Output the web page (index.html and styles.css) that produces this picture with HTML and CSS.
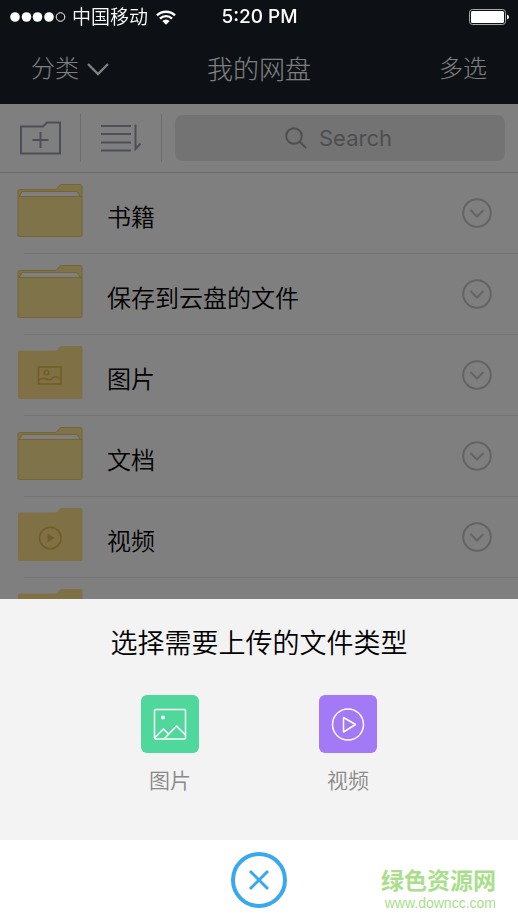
FILE: index.html
```html
<!DOCTYPE html>
<html lang="zh-CN">
<head>
<meta charset="utf-8">
<meta name="viewport" content="width=device-width, initial-scale=1">
<title>我的网盘</title>
<link rel="stylesheet" href="styles.css">
</head>
<body>
<svg class="defs" aria-hidden="true">
  <symbol id="folder-open" viewBox="0 0 66 54">
    <path class="folder-shape" d="M1 52V7q0-1.500 1.500-1.500H38q1.500 0 2.500-1.500l1.500-2q1-1.500 2.500-1.500H63q2 0 2 2V51q0 1.500-1.500 1.500H2.500Q1 52.500 1 51z"/>
    <path class="folder-paper" d="M3 12 5.500 7.500h54L63 12z"/>
    <path class="folder-line" d="M1 12.500h64M2.500 12 5 7.500h55l3 4.500"/>
  </symbol>
  <symbol id="folder-plain" viewBox="0 0 66 54">
    <path class="folder-body" d="M1 51V6Q1 4.500 2.500 4.500h35.500q2 0 3-1.500l1-1.500Q43 0 45 0H63.500q2 0 2 2V51q0 2-2 2H3q-2 0-2-2z"/>
  </symbol>
  <symbol id="more" viewBox="0 0 30 30">
    <circle cx="15" cy="15" r="13.800"/>
    <path d="m8.500 12 6.500 6.500 6.500-6.500"/>
  </symbol>
</svg>

<div class="status">
  <div class="carrier">
    <svg class="signal" viewBox="0 0 56 12" aria-hidden="true">
      <circle cx="5" cy="6" r="4.800"/><circle cx="16.500" cy="6" r="4.800"/><circle cx="27.500" cy="6" r="4.800"/><circle cx="39" cy="6" r="4.800"/><circle class="empty" cx="50.500" cy="6" r="4.300"/>
    </svg>
    <span>中国移动</span>
    <svg class="wifi" viewBox="0 0 20 15" aria-hidden="true">
      <path d="M1 5.400a13 13 0 0 1 18 0M4 8.600a8.600 8.600 0 0 1 12 0"/>
      <path class="dot" d="M6.300 11a5.300 5.300 0 0 1 7.400 0L10 14.800z"/>
    </svg>
  </div>
  <time class="clock">5:20 PM</time>
  <svg class="battery" viewBox="0 0 40 16" aria-hidden="true">
    <rect class="shell" x=".5" y=".5" width="36" height="15" rx="3"/>
    <rect x="2" y="2" width="33" height="12" rx="1.500"/>
    <path d="M38 5.500q2 .5 2 2.500t-2 2.500z"/>
  </svg>
</div>

<main class="app">
  <header class="nav">
    <button class="nav-button" type="button">分类
      <svg class="caret" viewBox="0 0 22 13" aria-hidden="true"><path d="m1 1 10 10L21 1"/></svg>
    </button>
    <h1>我的网盘</h1>
    <button class="nav-button nav-end" type="button">多选</button>
  </header>

  <div class="toolbar">
    <button class="tool" type="button" aria-label="新建文件夹">
      <svg class="tool-icon" viewBox="0 0 42 34" aria-hidden="true"><path d="M2 32.500V5.500h22l4-4h13v31zM21.500 11v16M13.500 19h16"/></svg>
    </button>
    <button class="tool" type="button" aria-label="排序">
      <svg class="tool-icon" viewBox="0 0 42 34" aria-hidden="true"><path d="M1 5h30M1 13h30M1 21.500h30M1 29.500h30M35.500 3.500V28l5-5.500"/></svg>
    </button>
    <label class="search">
      <svg viewBox="0 0 22 22" aria-hidden="true"><circle cx="9" cy="9" r="7.800"/><path d="m14.500 14.500 6.500 6.500"/></svg>
      <input type="text" placeholder="Search" aria-label="Search">
    </label>
  </div>

  <ul class="files">
    <li class="file">
      <svg class="folder" aria-hidden="true"><use href="#folder-open"/></svg>
      <span class="name">书籍</span>
      <button class="more" type="button" aria-label="书籍 更多"><svg aria-hidden="true"><use href="#more"/></svg></button>
    </li>
    <li class="file">
      <svg class="folder" aria-hidden="true"><use href="#folder-open"/></svg>
      <span class="name">保存到云盘的文件</span>
      <button class="more" type="button" aria-label="保存到云盘的文件 更多"><svg aria-hidden="true"><use href="#more"/></svg></button>
    </li>
    <li class="file">
      <svg class="folder" viewBox="0 0 66 54" aria-hidden="true">
        <use href="#folder-plain"/>
        <g class="folder-mark"><rect x="21.500" y="21" width="22.500" height="17"/><circle cx="29.500" cy="26.500" r="2.300"/><path d="M22 34q4-3 7.500-1 3.500 2 6-1 4-3 8 1.500"/></g>
      </svg>
      <span class="name">图片</span>
      <button class="more" type="button" aria-label="图片 更多"><svg aria-hidden="true"><use href="#more"/></svg></button>
    </li>
    <li class="file">
      <svg class="folder" aria-hidden="true"><use href="#folder-open"/></svg>
      <span class="name">文档</span>
      <button class="more" type="button" aria-label="文档 更多"><svg aria-hidden="true"><use href="#more"/></svg></button>
    </li>
    <li class="file">
      <svg class="folder" viewBox="0 0 66 54" aria-hidden="true">
        <use href="#folder-plain"/>
        <g class="folder-mark"><circle cx="33.300" cy="30" r="10.800"/><path class="solid" d="m30.500 25.500 7 4.500-7 4.500z"/></g>
      </svg>
      <span class="name">视频</span>
      <button class="more" type="button" aria-label="视频 更多"><svg aria-hidden="true"><use href="#more"/></svg></button>
    </li>
    <li class="file">
      <svg class="folder" aria-hidden="true"><use href="#folder-plain"/></svg>
    </li>
  </ul>
</main>

<div class="backdrop"></div>

<section class="sheet" role="dialog" aria-labelledby="sheet-title">
  <div class="sheet-body">
    <h2 id="sheet-title">选择需要上传的文件类型</h2>
    <div class="choices">
      <button class="choice" type="button">
        <svg class="tile green" viewBox="0 0 58 58" aria-hidden="true"><rect x="13.500" y="14.500" width="31" height="29.500" rx="1"/><circle class="solid" cx="22" cy="22.500" r="2"/><path d="m14 42.500 8.500-8.500 5 5M23.500 43.500 35.500 31l9 9"/></svg>
        图片
      </button>
      <button class="choice" type="button">
        <svg class="tile purple" viewBox="0 0 58 58" aria-hidden="true"><circle cx="29" cy="29.500" r="15.500"/><path d="M24.500 22.500v14.500l12-7.500z"/></svg>
        视频
      </button>
    </div>
  </div>
  <footer class="sheet-footer">
    <button class="close" type="button" aria-label="关闭">
      <svg viewBox="0 0 58 58" aria-hidden="true"><circle cx="29" cy="29" r="26"/><path d="m20 20 18 18M38 20 20 38"/></svg>
    </button>
    <div class="credit"><strong>绿色资源网</strong><span>www.downcc.com</span></div>
  </footer>
</section>
</body>
</html>
```
FILE: styles.css
```css
* {
  box-sizing: border-box;
}

body {
  margin: 0;
  height: 100vh;
  overflow: hidden;
  background: #fff;
  color: #000;
  font-family: Inter, "Noto Sans CJK SC", sans-serif;
  font-weight: 350;
}

button {
  padding: 0;
  border: 0;
  background: none;
  color: inherit;
  font: inherit;
}

svg {
  display: block;
  flex: none;
}

.defs {
  position: absolute;
  width: 0;
  height: 0;
}

/* Status bar */
.status {
  position: fixed;
  z-index: 2;
  top: 0;
  left: 0;
  right: 0;
  display: grid;
  grid-template-columns: 1fr auto 1fr;
  align-items: center;
  height: 34px;
  padding: 0 9px 0 10px;
  color: #fff;
  font-size: 19px;
  line-height: 24px;
}

.status svg {
  fill: #fff;
}

.carrier {
  display: flex;
  align-items: center;
  gap: 8px;
}

.carrier span {
  margin-left: -2px;
  padding-top: 2px;
}

.signal {
  width: 56px;
  height: 12px;
}

.status .empty {
  fill: none;
  stroke: #fff;
}

.wifi {
  width: 20px;
  height: 15px;
}

.status .wifi path {
  fill: none;
  stroke: #fff;
  stroke-width: 2.4;
}

.status .wifi .dot {
  fill: #fff;
  stroke: none;
}

.clock {
  font-weight: 500;
}

.battery {
  width: 40px;
  height: 16px;
  justify-self: end;
}

.status .shell {
  fill: none;
  stroke: #aaa;
}

/* Navigation */
.nav {
  display: grid;
  grid-template-columns: 1fr auto 1fr;
  align-items: center;
  height: 104px;
  padding: 34px 31px 0;
  background: #1a222c;
  color: #fff;
  font-weight: 300;
}

.nav h1 {
  margin: 0;
  padding-top: 2px;
  font-size: 26px;
  line-height: 40px;
  font-weight: 300;
}

.nav-button {
  display: flex;
  align-items: center;
  gap: 8px;
  font-size: 24px;
  line-height: 36px;
}

.nav-end {
  justify-self: end;
}

.caret {
  width: 22px;
  height: 13px;
  fill: none;
  stroke: #fff;
  stroke-width: 2.4;
}

/* Toolbar */
.toolbar {
  display: flex;
  align-items: center;
  height: 69px;
  padding-right: 13px;
  border-bottom: 1px solid #d4d4d4;
}

.tool {
  display: grid;
  place-items: center;
  flex: none;
  width: 81px;
  height: 48px;
  border-right: 1px solid #d8d8d8;
}

.tool-icon {
  width: 42px;
  height: 34px;
  fill: none;
  stroke: #989fb0;
  stroke-width: 2;
}

.search {
  display: flex;
  flex: 1;
  align-items: center;
  justify-content: center;
  gap: 12px;
  height: 46px;
  margin-left: 13px;
  border-radius: 8px;
  background: #e6e6e6;
}

.search svg {
  width: 22px;
  height: 22px;
  fill: none;
  stroke: #9c9ca2;
  stroke-width: 2;
}

.search input {
  width: 76px;
  padding: 0;
  border: 0;
  outline: 0;
  appearance: none;
  background: none;
  color: #000;
  font: 22px/28px Inter, "Noto Sans CJK SC", sans-serif;
}

.search input::placeholder {
  color: #9c9ca2;
  opacity: 1;
}

/* File list */
.files {
  margin: 0;
  padding: 0 0 0 24px;
  list-style: none;
}

.file {
  display: flex;
  align-items: center;
  height: 81px;
  padding-right: 26px;
  border-bottom: 1px solid #e9e9e9;
}

.folder {
  width: 66px;
  height: 54px;
  margin: 0 24px 4px -7px;
}

.folder-shape {
  fill: #fee693;
  stroke: #ecc964;
}

.folder-paper {
  fill: #fff;
}

.folder-line {
  fill: none;
  stroke: #ecc964;
}

.folder-body {
  fill: #fee28a;
}

.folder-mark {
  fill: none;
  stroke: #e2b94a;
  stroke-width: 1.5;
}

.folder-mark .solid {
  fill: #e2b94a;
  stroke: none;
}

.name {
  flex: 1;
  padding-top: 10px;
  font-size: 24px;
  line-height: 36px;
}

.more svg {
  width: 30px;
  height: 30px;
  fill: none;
  stroke: #c6c6c6;
  stroke-width: 2;
}

/* Upload sheet */
.backdrop {
  position: fixed;
  z-index: 1;
  inset: 0;
  background: rgba(0, 0, 0, .5);
}

.sheet {
  position: fixed;
  z-index: 2;
  left: 0;
  right: 0;
  bottom: 0;
}

.sheet-body {
  padding: 25px 0 44px;
  background: #f3f3f3;
}

.sheet h2 {
  margin: 0 0 31px;
  font-size: 27px;
  line-height: 40px;
  font-weight: 350;
  text-align: center;
}

.choices {
  display: grid;
  grid-template-columns: 1fr 1fr;
  max-width: 356px;
  margin: 0 auto;
}

.choice {
  display: flex;
  flex-direction: column;
  align-items: center;
  gap: 13px;
  color: #888;
  font-size: 21px;
  line-height: 30px;
}

.tile {
  width: 58px;
  height: 58px;
  border-radius: 6px;
  fill: none;
  stroke: #fff;
  stroke-width: 1.5;
  stroke-linejoin: round;
}

.tile .solid {
  fill: #fff;
  stroke: none;
}

.green {
  background: #50d79b;
}

.purple {
  background: #a379f6;
}

.sheet-footer {
  position: relative;
  display: grid;
  place-items: center;
  height: 80px;
  background: #fff;
}

.close svg {
  width: 58px;
  height: 58px;
  fill: none;
  stroke: #38a8ef;
  stroke-width: 4;
}

.close path {
  stroke-width: 3;
}

.credit {
  position: absolute;
  right: 22px;
  bottom: 8px;
  display: flex;
  flex-direction: column;
  align-items: flex-end;
  color: #a9de8b;
}

.credit strong {
  font-size: 23px;
  line-height: 25px;
}

.credit span {
  font: 14px/18px "Liberation Sans", sans-serif;
}
```
